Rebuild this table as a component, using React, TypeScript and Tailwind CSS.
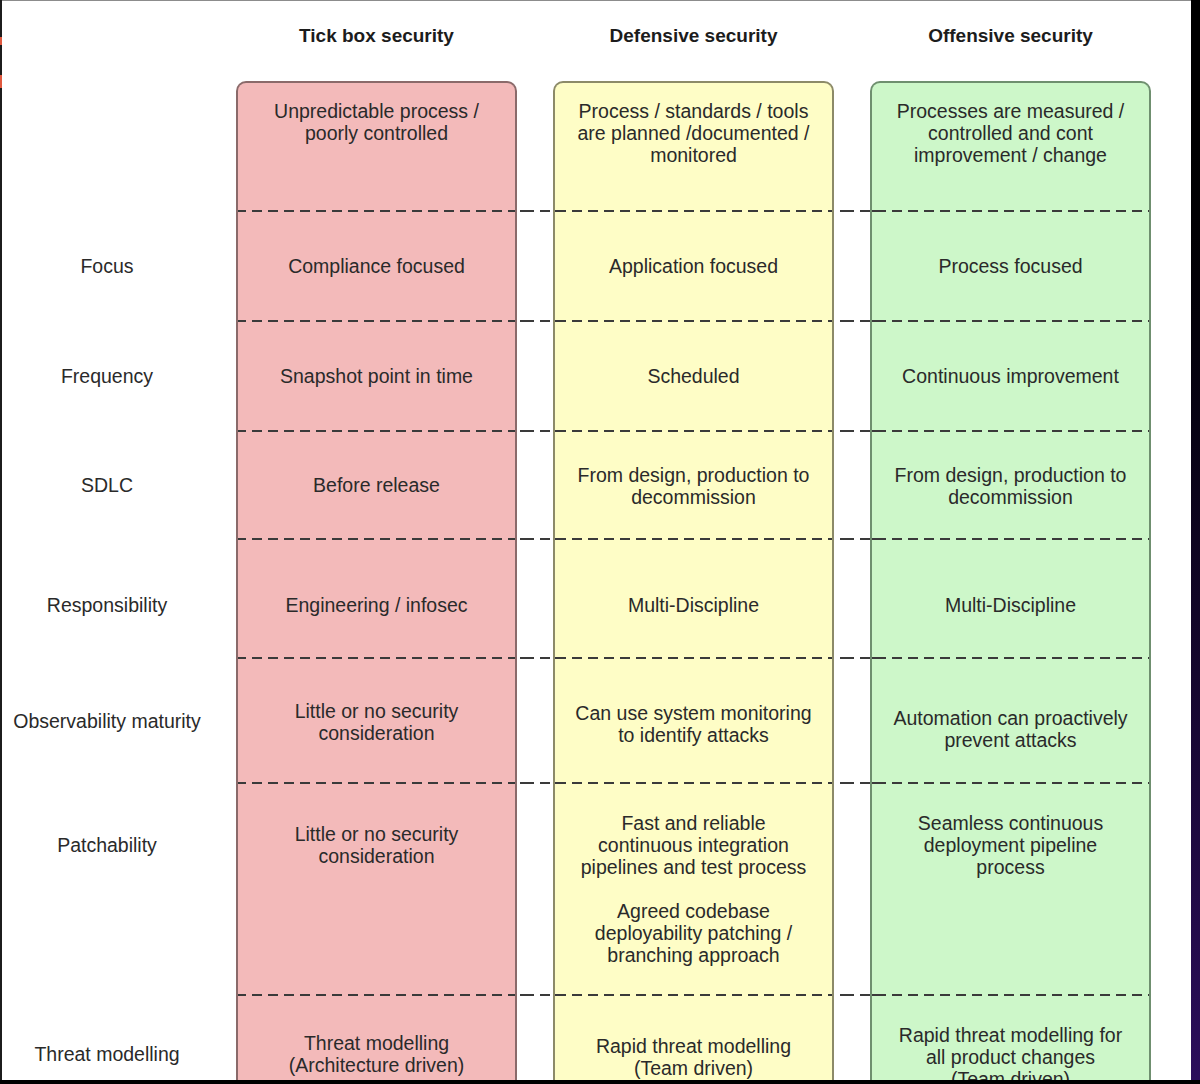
import React from "react";

type Cell = { lines: React.ReactNode; pt: string };

const COLS = [
  { bg: "bg-[#f3baba]", border: "border-[#8a6a6a]" },
  { bg: "bg-[#fefdc6]", border: "border-[#8c8a68]" },
  { bg: "bg-[#cdf7c9]", border: "border-[#6f8f6f]" },
];

const GRID = "grid grid-cols-[234px_281px_36px_281px_36px_281px_40px]";

const DASH =
  "bg-[repeating-linear-gradient(to_right,#3a3a3a_0px,#3a3a3a_10px,transparent_10px,transparent_16px)] bg-origin-border bg-repeat-x";

function Lines({ items }: { items: string[] }) {
  return (
    <>
      {items.map((t, i) => (
        <div key={i} className="whitespace-nowrap">
          {t}
        </div>
      ))}
    </>
  );
}

function Row({
  h,
  label,
  labelPt,
  cells,
  first,
}: {
  h: string;
  label?: string;
  labelPt?: string;
  cells: Cell[];
  first?: boolean;
}) {
  const colCell = (i: number) => {
    const c = COLS[i];
    const cell = cells[i];
    return (
      <div
        className={`${c.bg} ${c.border} border-x-2 ${
          first ? "border-t-2 rounded-t-[10px]" : ""
        } ${cell.pt} text-center`}
      >
        {cell.lines}
      </div>
    );
  };
  return (
    <div className={`${GRID} ${h} shrink-0 overflow-hidden`}>
      <div className={`pr-[24px] text-center ${labelPt ?? ""}`}>
        {label ? <div className="whitespace-nowrap">{label}</div> : null}
      </div>
      {colCell(0)}
      <div />
      {colCell(1)}
      <div />
      {colCell(2)}
      <div />
    </div>
  );
}

function DashRow() {
  return (
    <div className={`${GRID} h-[2px] shrink-0`}>
      <div />
      <div className={`${COLS[0].bg} ${COLS[0].border} border-x-2 ${DASH} bg-position-[0px_0px]`} />
      <div className={`${DASH} bg-position-[7px_0px]`} />
      <div className={`${COLS[1].bg} ${COLS[1].border} border-x-2 ${DASH} bg-position-[3px_0px]`} />
      <div className={`${DASH} bg-position-[10px_0px]`} />
      <div className={`${COLS[2].bg} ${COLS[2].border} border-x-2 ${DASH} bg-position-[6px_0px]`} />
      <div />
    </div>
  );
}

export default function App() {
  return (
    <div className="w-[1200px] h-[1084px] bg-black flex flex-col overflow-hidden font-['Liberation_Sans',Arial,Helvetica,sans-serif] text-[#2a2a2a] text-[19.5px] leading-[22px]">
      <div className="flex h-[1080px] shrink-0">
        {/* left edge stripe */}
        <div className="w-[2px] bg-[#1c1c1c] flex flex-col">
          <div className="h-[37px]" />
          <div className="h-[8px] bg-[#e0583e]" />
          <div className="h-[30px]" />
          <div className="h-[13px] bg-[#e0583e]" />
        </div>

        {/* main slide area */}
        <div className="w-[1189px] bg-white border-t border-[#8c8c8c] flex flex-col overflow-hidden">
          {/* headers */}
          <div className={`${GRID} h-[80px] shrink-0 font-bold text-[#1c1c1c] text-[19px]`}>
            <div />
            <div className="pt-[24px] text-center whitespace-nowrap">Tick box security</div>
            <div />
            <div className="pt-[24px] text-center whitespace-nowrap">Defensive security</div>
            <div />
            <div className="pt-[24px] text-center whitespace-nowrap">Offensive security</div>
            <div />
          </div>

          <Row
            first
            h="h-[129px]"
            cells={[
              { pt: "pt-[17px]", lines: <Lines items={["Unpredictable process /", "poorly controlled"]} /> },
              { pt: "pt-[17px]", lines: <Lines items={["Process / standards / tools", "are planned /documented /", "monitored"]} /> },
              { pt: "pt-[17px]", lines: <Lines items={["Processes are measured /", "controlled and cont", "improvement / change"]} /> },
            ]}
          />
          <DashRow />
          <Row
            h="h-[108px]"
            label="Focus"
            labelPt="pt-[43px]"
            cells={[
              { pt: "pt-[43px]", lines: <Lines items={["Compliance focused"]} /> },
              { pt: "pt-[43px]", lines: <Lines items={["Application focused"]} /> },
              { pt: "pt-[43px]", lines: <Lines items={["Process focused"]} /> },
            ]}
          />
          <DashRow />
          <Row
            h="h-[108px]"
            label="Frequency"
            labelPt="pt-[43px]"
            cells={[
              { pt: "pt-[43px]", lines: <Lines items={["Snapshot point in time"]} /> },
              { pt: "pt-[43px]", lines: <Lines items={["Scheduled"]} /> },
              { pt: "pt-[43px]", lines: <Lines items={["Continuous improvement"]} /> },
            ]}
          />
          <DashRow />
          <Row
            h="h-[106px]"
            label="SDLC"
            labelPt="pt-[42px]"
            cells={[
              { pt: "pt-[42px]", lines: <Lines items={["Before release"]} /> },
              { pt: "pt-[32px]", lines: <Lines items={["From design, production to", "decommission"]} /> },
              { pt: "pt-[32px]", lines: <Lines items={["From design, production to", "decommission"]} /> },
            ]}
          />
          <DashRow />
          <Row
            h="h-[117px]"
            label="Responsibility"
            labelPt="pt-[54px]"
            cells={[
              { pt: "pt-[54px]", lines: <Lines items={["Engineering / infosec"]} /> },
              { pt: "pt-[54px]", lines: <Lines items={["Multi-Discipline"]} /> },
              { pt: "pt-[54px]", lines: <Lines items={["Multi-Discipline"]} /> },
            ]}
          />
          <DashRow />
          <Row
            h="h-[123px]"
            label="Observability maturity"
            labelPt="pt-[51px]"
            cells={[
              { pt: "pt-[41px]", lines: <Lines items={["Little or no security", "consideration"]} /> },
              { pt: "pt-[43px]", lines: <Lines items={["Can use system monitoring", "to identify attacks"]} /> },
              { pt: "pt-[48px]", lines: <Lines items={["Automation can proactively", "prevent attacks"]} /> },
            ]}
          />
          <DashRow />
          <Row
            h="h-[210px]"
            label="Patchability"
            labelPt="pt-[50px]"
            cells={[
              { pt: "pt-[39px]", lines: <Lines items={["Little or no security", "consideration"]} /> },
              {
                pt: "pt-[28px]",
                lines: (
                  <>
                    <Lines items={["Fast and reliable", "continuous integration", "pipelines and test process"]} />
                    <div className="mt-[22px]">
                      <Lines items={["Agreed codebase", "deployability patching /", "branching approach"]} />
                    </div>
                  </>
                ),
              },
              { pt: "pt-[28px]", lines: <Lines items={["Seamless continuous", "deployment pipeline", "process"]} /> },
            ]}
          />
          <DashRow />
          <Row
            h="h-[90px]"
            label="Threat modelling"
            labelPt="pt-[47px]"
            cells={[
              { pt: "pt-[36px]", lines: <Lines items={["Threat modelling", "(Architecture driven)"]} /> },
              { pt: "pt-[39px]", lines: <Lines items={["Rapid threat modelling", "(Team driven)"]} /> },
              { pt: "pt-[28px]", lines: <Lines items={["Rapid threat modelling for", "all product changes", "(Team driven)"]} /> },
            ]}
          />
        </div>

        {/* right dark edge */}
        <div className="w-[9px] bg-linear-to-b from-black via-[#0e0420] to-[#2c0e5c]" />
      </div>
      <div className="h-[4px] bg-black shrink-0" />
    </div>
  );
}
